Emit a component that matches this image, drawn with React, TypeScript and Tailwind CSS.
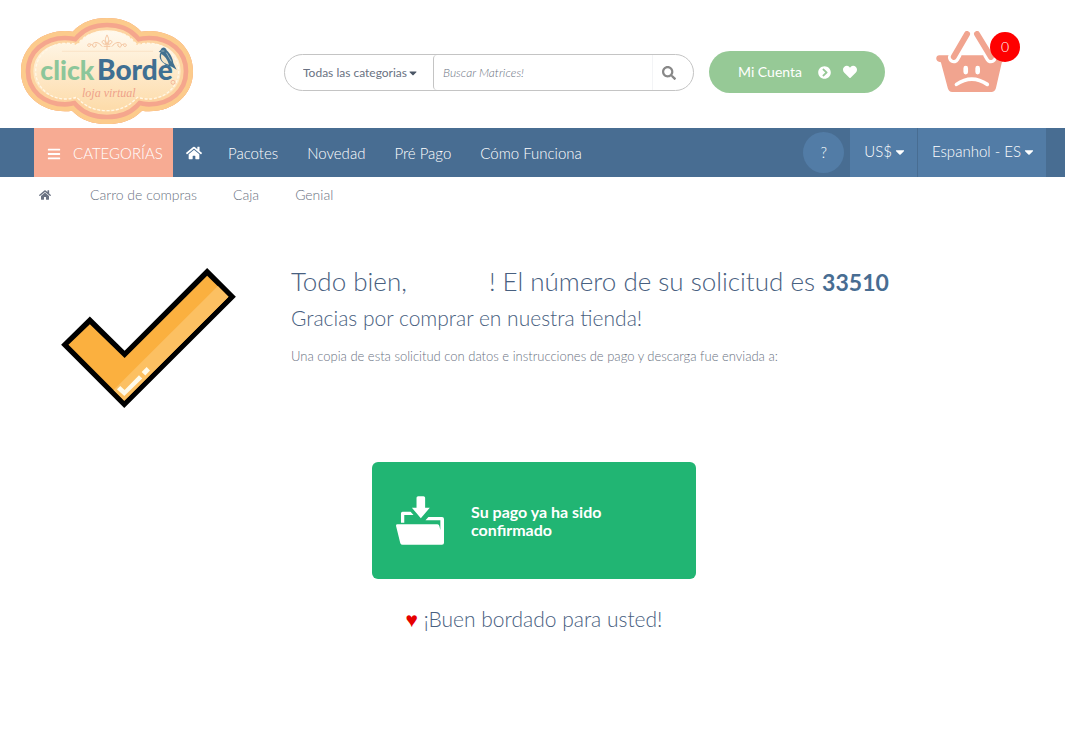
import { FaBars, FaCaretDown, FaChevronCircleRight, FaHeart, FaHome, FaSearch } from "react-icons/fa";

const NAV = ["Pacotes", "Novedad", "Pré Pago", "Cómo Funciona"];
const CRUMBS = ["Carro de compras", "Caja", "Genial"];

const BADGE =
  "M33 183C33 110 95 62 165 62Q177 62 188 64C215 35 250 23 291 23C332 23 367 35 394 64Q406 62 417 62C490 62 549 110 549 183C549 256 490 303 417 303Q406 303 396 301C368 330 332 341 291 341C250 341 214 330 186 301Q176 303 165 303C95 303 33 256 33 183Z";

function Logo() {
  return (
    <svg viewBox="33 23 516 318" className="block h-[106px] w-[172px]" role="img" aria-label="clickBorde">
      <defs>
        <linearGradient id="cream" x1="0" y1="0" x2="0" y2="1">
          <stop offset="0.1" stopColor="#fffaf0" />
          <stop offset="0.85" stopColor="#fddcab" />
        </linearGradient>
        <clipPath id="shape">
          <path d={BADGE} />
        </clipPath>
      </defs>
      <g clipPath="url(#shape)" fill="none">
        <path d={BADGE} fill="url(#cream)" />
        <path d={BADGE} stroke="#fdd3a0" strokeWidth="74" />
        <path d={BADGE} stroke="#f5a68d" strokeWidth="56" />
        <path d={BADGE} stroke="#fccb8c" strokeWidth="28" />
      </g>
      <path
        d="M77 183C77 135 120 99 165 99Q185 98 202 103C225 72 255 63 291 63C327 63 357 72 380 103Q397 98 417 99C462 99 506 135 506 183C506 231 462 266 417 266Q399 266 382 261C355 290 327 301 291 301C255 301 227 290 200 261Q183 266 165 266C120 266 77 231 77 183Z"
        fill="none"
        stroke="#fff7e6"
        strokeWidth="4"
        strokeDasharray="9 5"
      />
      <g fill="none" stroke="#f4c49f" strokeWidth="3" strokeLinecap="round">
        <path d="M157 123H428" strokeWidth="1" />
        <path d="M276 108C265 92 247 94 248 105S263 108 258 101M306 108C317 92 335 94 334 105S319 108 324 101M248 105C242 99 232 99 233 105S242 109 242 104M334 105C340 99 350 99 349 105S340 109 340 104" />
        <path d="M291 75C284 84 285 92 291 101C297 92 298 84 291 75ZM288 102C277 103 273 94 279 91S286 97 288 102M294 102C305 103 309 94 303 91S296 97 294 102M291 102V118M282 108H300" />
      </g>
      <text x="91" y="210" fontFamily="Lato, sans-serif" fontWeight="900" fontSize="80" fill="#8cc69a">
        click
      </text>
      <text x="261" y="210" fontFamily="Lato, sans-serif" fontWeight="900" fontSize="84" fill="#3f6f92">
        Borde
      </text>
      <text x="216" y="261" fontFamily="'Liberation Serif', serif" fontStyle="italic" fontSize="36" fill="#efa189">
        loja virtual
      </text>
      <circle cx="489" cy="216" r="6" fill="none" stroke="#efa189" strokeWidth="2" />
      <path d="M446 125L452 119C454 110 467 108 470 120C481 130 489 145 490 158L500 178L485 169C468 166 451 155 449 140Q448 131 452 126Z" fill="#41708f" />
      <path d="M454 131C450 148 458 159 477 163C472 148 464 136 454 131Z" fill="#f5e6c8" />
      <path d="M469 127L484 153M454 122H463" stroke="#c5d2cc" strokeWidth="2" />
      <path d="M466 160V172M476 164V175" stroke="#41708f" strokeWidth="2" />
    </svg>
  );
}

function Basket() {
  return (
    <svg viewBox="708 32 252 184" className="block h-[61px] w-[84px]" aria-hidden="true">
      <path
        d="M717 105H904Q914 105 914 114Q914 124 906 126L888 205Q885 216 874 216H756Q746 216 743 205L722 126Q708 124 708 114Q709 105 717 105Z"
        fill="#f1a48f"
      />
      <g strokeLinecap="round" fill="none">
        <path d="M761 112L768 100M873 112L866 100" stroke="#fff" strokeWidth="35" />
        <path d="M761 110L801 41M873 110L831 41" stroke="#f1a48f" strokeWidth="18" />
        <path d="M797 144V156M833 144V156" stroke="#fff" strokeWidth="14" />
        <path d="M769 193Q815 161 862 193" stroke="#fff" strokeWidth="11" />
      </g>
    </svg>
  );
}

function CheckMark() {
  return (
    <svg viewBox="34 39 523 419" className="block h-[140px] w-[175px] shrink-0" aria-hidden="true">
      <path d="M34 269L120 184L224 287L471 39L557 125L223 458Z" fill="#000" />
      <path d="M56 269L120 207L224 308L471 62L535 125L223 436Z" fill="#fbb03f" />
      <path d="M503 93L535 125L223 436L191 404Z" fill="#fcc062" />
      <path d="M201 402L211 392L224 404L267 360L277 370L223 422ZM275 350L290 335L300 346L286 361Z" fill="#fffbea" />
    </svg>
  );
}

function FolderDownload() {
  return (
    <svg viewBox="93 123 145 147" className="block h-[49px] w-12 shrink-0" fill="#fff" aria-hidden="true">
      <path d="M160 123H176Q181 123 181 128V158H195L168 190L141 158H155V128Q155 123 160 123Z" />
      <path d="M108 203V175Q108 170 113 170H137L146 180H118V203ZM191 186H232Q238 186 238 192V264Q238 270 232 270H113Q108 270 106 265L93 212Q93 208 97 208H218Q223 208 224 213L227 225V196H182Z" />
    </svg>
  );
}

function NavSelect({ label, text }: { label: string; text: string }) {
  return (
    <div className="relative bg-[#527ca6]">
      <select
        aria-label={label}
        className="field-sizing-content h-full appearance-none pr-[25px] pb-[2px] pl-[14px] text-[15px]"
      >
        <option>{text}</option>
      </select>
      <FaCaretDown className="pointer-events-none absolute top-[17px] right-[10px] size-[14px]" />
    </div>
  );
}

export default function App() {
  return (
    <div className="min-h-screen bg-white font-['Lato',sans-serif] font-light text-gray-500">
      <header className="flex items-center pt-[18px] pr-[45px] pb-1 pl-[21px]">
        <a href="#inicio" className="shrink-0">
          <Logo />
        </a>
        <form className="mt-[3px] ml-[91px] flex h-[37px] min-w-0 flex-1 rounded-full border border-[#c4c4c4]">
          <div className="relative">
            <select
              aria-label="Categorias"
              className="h-full w-[148px] appearance-none pl-[18px] text-xs font-normal text-gray-500"
            >
              <option>Todas las categorias</option>
            </select>
            <FaCaretDown className="pointer-events-none absolute top-3 right-[14px] size-3 text-gray-600" />
          </div>
          <input
            type="search"
            aria-label="Buscar"
            placeholder="Buscar Matrices!"
            className="min-w-0 flex-1 rounded-l border-x border-l-[#c4c4c4] border-r-gray-100 px-[9px] text-xs italic outline-none placeholder:text-gray-500"
          />
          <button type="submit" aria-label="Buscar" className="w-10 pl-[9px] text-[#888]">
            <FaSearch className="size-[14px]" />
          </button>
        </form>
        <a
          href="#cuenta"
          className="mt-[2px] ml-[15px] flex h-[42px] w-44 shrink-0 items-center rounded-full bg-[#96c996] pl-[29px] text-sm font-normal text-white"
        >
          Mi Cuenta
          <FaChevronCircleRight className="ml-auto size-[13px]" />
          <FaHeart className="mr-7 ml-3 size-[14px]" />
        </a>
        <a href="#carro" aria-label="Carro de compras" className="relative mb-[19px] ml-[51px] shrink-0">
          <Basket />
          <span className="absolute top-px right-0 flex size-[30px] items-center justify-center rounded-full bg-[#fe0000] text-sm text-white">
            0
          </span>
        </a>
      </header>

      <nav className="flex h-[49px] items-center bg-[#486d92] pr-[19px] pl-[34px] text-[15px] text-white">
        <button className="flex h-full w-[139px] shrink-0 items-center gap-3 bg-[#f7ab93] pt-[2px] pl-[13px]">
          <FaBars className="size-[14px]" />
          CATEGORÍAS
        </button>
        <a href="#inicio" aria-label="Inicio" className="ml-[13px]">
          <FaHome className="size-4" />
        </a>
        <ul className="ml-[26px] flex gap-[29px] pt-[2px] whitespace-nowrap">
          {NAV.map((n) => (
            <li key={n}>
              <a href="#menu">{n}</a>
            </li>
          ))}
        </ul>
        <button
          aria-label="Ayuda"
          className="ml-auto size-[41px] shrink-0 rounded-full bg-[#527ca6]"
        >
          ?
        </button>
        <div className="ml-[6px] flex h-full shrink-0 gap-px">
          <NavSelect label="Moneda" text="US$" />
          <NavSelect label="Idioma" text="Espanhol - ES" />
        </div>
      </nav>

      <ol className="flex h-9 items-center pl-[39px] text-sm text-gray-500">
        <li className="mr-[39px]">
          <a href="#inicio" aria-label="Inicio">
            <FaHome className="size-3 text-gray-500" />
          </a>
        </li>
        {CRUMBS.map((c) => (
          <li key={c} className="mr-9">
            <a href="#ruta">{c}</a>
          </li>
        ))}
      </ol>

      <main className="pt-[51px]">
        <section className="flex gap-[55px] pl-[61px]">
          <div className="pt-1">
            <CheckMark />
          </div>
          <div className="min-w-0">
            <h1 className="text-[26px] leading-[34px] text-[#486080]">
              Todo bien,
              <span className="inline-block w-[82px]" />! El número de su solicitud es{" "}
              <strong className="text-[23px] leading-none font-bold text-[#486d92]">33510</strong>
            </h1>
            <h2 className="mt-2 text-[21px] leading-6 text-[#486080]">Gracias por comprar en nuestra tienda!</h2>
            <p className="mt-4 text-[13px] leading-5">
              Una copia de esta solicitud con datos e instrucciones de pago y descarga fue enviada a:
            </p>
          </div>
        </section>

        <section className="flex flex-col items-center pt-[54px] pl-[3px]">
          <div className="flex h-[117px] w-[324px] items-center gap-[27px] rounded-md bg-[#21b573] px-6">
            <FolderDownload />
            <p className="w-[150px] text-base leading-[18px] font-bold text-white">
              Su pago ya ha sido confirmado
            </p>
          </div>
          <p className="mt-7 text-[21px] leading-6 text-[#486080]">
            <span className="text-[#e60000]">♥</span> ¡Buen bordado para usted!
          </p>
        </section>
      </main>
    </div>
  );
}
